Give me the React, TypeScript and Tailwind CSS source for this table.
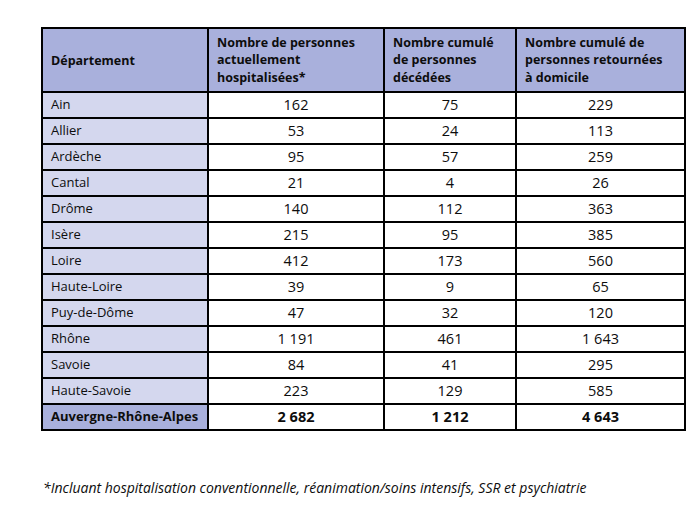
import React from "react";

const rows: [string, string, string, string][] = [
  ["Ain", "162", "75", "229"],
  ["Allier", "53", "24", "113"],
  ["Ardèche", "95", "57", "259"],
  ["Cantal", "21", "4", "26"],
  ["Drôme", "140", "112", "363"],
  ["Isère", "215", "95", "385"],
  ["Loire", "412", "173", "560"],
  ["Haute-Loire", "39", "9", "65"],
  ["Puy-de-Dôme", "47", "32", "120"],
  ["Rhône", "1 191", "461", "1 643"],
  ["Savoie", "84", "41", "295"],
  ["Haute-Savoie", "223", "129", "585"],
];

const num = "border-2 border-black text-center align-middle text-[14.5px] leading-[20px]";

export default function App() {
  return (
    <div
      className="w-[691px] h-[527px] bg-white text-[#0d0d0d] pt-[27px] pl-[41px]"
      style={{ fontFamily: '"Open Sans", "Noto Sans", sans-serif' }}
    >
      <table className="border-collapse border-2 border-black w-[643px] table-fixed text-[13px] leading-[17.5px]">
        <colgroup>
          <col className="w-[166px]" />
          <col className="w-[176px]" />
          <col className="w-[132px]" />
          <col className="w-[169px]" />
        </colgroup>
        <thead>
          <tr className="h-[64px] bg-[#a9b0dc] text-[12.5px]">
            <th className="border-2 border-black text-left align-middle pl-[8px] pt-[2px] font-bold">Département</th>
            <th className="border-2 border-black text-left align-middle pl-[8px] pr-[4px] font-bold">
              Nombre de personnes actuellement hospitalisées*
            </th>
            <th className="border-2 border-black text-left align-middle pl-[8px] pr-[4px] font-bold">
              Nombre cumulé de personnes décédées
            </th>
            <th className="border-2 border-black text-left align-middle pl-[8px] pr-[14px] font-bold">
              Nombre cumulé de personnes retournées à domicile
            </th>
          </tr>
        </thead>
        <tbody>
          {rows.map((r) => (
            <tr key={r[0]} className="h-[26px]">
              <td className="border-2 border-black bg-[#d4d7ee] pl-[8px] align-middle">{r[0]}</td>
              <td className={num}>{r[1]}</td>
              <td className={num}>{r[2]}</td>
              <td className={num}>{r[3]}</td>
            </tr>
          ))}
          <tr className="h-[26px] font-bold">
            <td className="border-2 border-black bg-[#a9b0dc] pl-[8px] align-middle">Auvergne-Rhône-Alpes</td>
            <td className={num}>2 682</td>
            <td className={num}>1 212</td>
            <td className={num}>4 643</td>
          </tr>
        </tbody>
      </table>
      <p className="mt-[47px] ml-[2px] italic text-[14px] leading-[19px] text-[#0d0d0d]">
        *Incluant hospitalisation conventionnelle, réanimation/soins intensifs, SSR et psychiatrie
      </p>
    </div>
  );
}
